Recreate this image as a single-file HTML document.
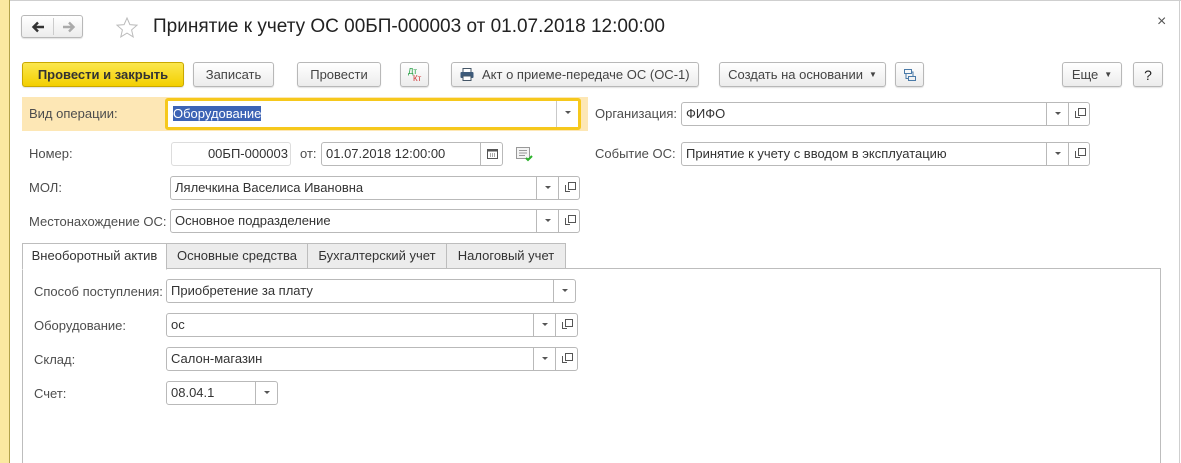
<!DOCTYPE html>
<html style="width:1181px;height:463px;overflow:hidden"><head><meta charset="utf-8"><style>
*{box-sizing:border-box;margin:0;padding:0}
body{width:1181px;height:463px;overflow:hidden;background:#fff;font-family:"Liberation Sans",Arial,sans-serif;font-size:13px;color:#333;position:relative}
.a{position:absolute}
.btn{position:absolute;height:25px;border:1px solid #b8b8b8;border-radius:3px;background:linear-gradient(#fff,#ececec);box-shadow:0 1px 1px rgba(0,0,0,.12);display:flex;align-items:center;justify-content:center;color:#444}
.lbl{position:absolute;color:#4d4d4d;line-height:16px}
.fld{position:absolute;height:24px;border:1px solid #b9b9b9;border-radius:3px;background:#fff;line-height:22px;padding-left:4px;color:#333;white-space:nowrap}
.dd{position:absolute;top:-1px;height:24px;border-left:1px solid #b9b9b9;width:23px}
.dd:after{content:"";position:absolute;left:8px;top:10px;border-left:3px solid transparent;border-right:3px solid transparent;border-top:3px solid #555}
.cp{position:absolute;top:-1px;height:24px;border-left:1px solid #b9b9b9;width:22px}
.cp:before{content:"";position:absolute;left:9px;top:6px;width:6px;height:6px;border:1px solid #555}
.cp:after{content:"";position:absolute;left:6px;top:9px;width:4px;height:6px;border-left:1px solid #555;border-bottom:1px solid #555}
.tab{position:absolute;top:243px;height:26px;border:1px solid #bdbdbd;background:#ececec;color:#333;text-align:center;line-height:24px}
</style></head><body>
<div class="a" style="left:0;top:0;width:9px;height:463px;background:#fbe9a0"></div>
<div class="a" style="left:9px;top:0;width:1px;height:463px;background:#b3a34a"></div>
<div class="a" style="left:10px;top:0;width:1171px;height:1px;background:#cfcfcf"></div>
<div class="a" style="left:1179px;top:0;width:1px;height:463px;background:#cfcfcf"></div>

<div class="btn" style="left:21px;top:15px;width:62px;height:23px;padding:0">
<svg style="position:absolute;left:9px;top:5px" width="14" height="12" viewBox="0 0 14 12"><path d="M13 6H3M7 1.5L2.5 6 7 10.5" fill="none" stroke="#333" stroke-width="2.4"/></svg>
<span style="position:absolute;left:31px;top:2px;width:1px;height:17px;background:#ccc"></span>
<svg style="position:absolute;left:40px;top:5px" width="14" height="12" viewBox="0 0 14 12"><path d="M1 6h10M7 1.5L11.5 6 7 10.5" fill="none" stroke="#aaa" stroke-width="2.4"/></svg></div>
<svg class="a" style="left:115px;top:16px" width="24" height="24" viewBox="0 0 24 24"><path d="M12 2l2.9 6.6 7.1.6-5.4 4.7 1.6 7-6.2-3.8-6.2 3.8 1.6-7L2 9.2l7.1-.6z" fill="none" stroke="#bbb" stroke-width="1"/></svg>
<div class="a" style="left:153px;top:15px;font-size:19px;color:#222;white-space:nowrap;line-height:24px">Принятие к учету ОС 00БП-000003 от 01.07.2018 12:00:00</div>
<div class="a" style="left:1157px;top:13px;font-size:16px;color:#555">×</div>

<div class="btn" style="left:22px;top:62px;width:162px;background:linear-gradient(#fbe74e,#f3cf00);border-color:#c9a800;color:#333;font-weight:bold">Провести и закрыть</div>
<div class="btn" style="left:193px;top:62px;width:81px">Записать</div>
<div class="btn" style="left:297px;top:62px;width:84px">Провести</div>
<div class="btn" style="left:400px;top:62px;width:29px"><span style="font-size:8px;line-height:8px;position:absolute;left:7px;top:5px;color:#1a9a3a">Дт</span><span style="font-size:8px;line-height:8px;position:absolute;left:12px;top:12px;color:#d03030">Кт</span></div>
<div class="btn" style="left:451px;top:62px;width:248px;justify-content:flex-start;padding-left:8px"><svg width="14" height="13" viewBox="0 0 14 13"><rect x="3" y="0.5" width="8" height="4" fill="#fff" stroke="#456"/><rect x="0.5" y="4" width="13" height="6" rx="1" fill="#3d5a7a"/><rect x="3" y="8" width="8" height="4.5" fill="#fff" stroke="#456"/></svg><span style="margin-left:8px">Акт о приеме-передаче ОС (ОС-1)</span></div>
<div class="btn" style="left:719px;top:62px;width:167px">Создать на основании <span style="font-size:8px;margin-left:6px">▼</span></div>
<div class="btn" style="left:895px;top:62px;width:29px"><svg width="14" height="14" viewBox="0 0 14 14" fill="none" stroke="#4a7aa8"><rect x="1.5" y="1.5" width="7" height="4"/><rect x="5.5" y="8.5" width="7" height="4"/><path d="M3 6v4.5h2.5M10 8.5V4H8.5"/></svg></div>
<div class="btn" style="left:1062px;top:62px;width:60px">Еще <span style="font-size:8px;margin-left:6px">▼</span></div>
<div class="btn" style="left:1133px;top:62px;width:30px;font-size:14px;color:#222">?</div>

<div class="a" style="left:22px;top:97px;width:566px;height:34px;background:#fde7b5"></div>
<div class="lbl" style="left:29px;top:106px">Вид операции:</div>
<div class="fld" style="left:165px;top:98px;width:416px;height:32px;border:3px solid #f6c81c;line-height:26px;padding-left:5px"><span style="background:#3c63b5;color:#fff">Оборудование</span><div class="dd" style="left:388px;top:0;height:26px;border-left-color:#c9c9c9"></div></div>

<div class="lbl" style="left:595px;top:106px">Организация:</div>
<div class="fld" style="left:681px;top:102px;width:409px">ФИФО<div class="dd" style="left:364px"></div><div class="cp" style="left:386px"></div></div>
<div class="lbl" style="left:595px;top:146px">Событие ОС:</div>
<div class="fld" style="left:681px;top:142px;width:409px">Принятие к учету с вводом в эксплуатацию<div class="dd" style="left:364px"></div><div class="cp" style="left:386px"></div></div>

<div class="lbl" style="left:29px;top:146px">Номер:</div>
<div class="fld" style="left:171px;top:142px;width:120px;text-align:right;padding-right:2px;border-color:#ddd">00БП-000003</div>
<div class="lbl" style="left:300px;top:146px">от:</div>
<div class="fld" style="left:321px;top:142px;width:182px">01.07.2018 12:00:00<div class="a" style="left:158px;top:-1px;width:23px;height:24px;border-left:1px solid #b9b9b9"><svg style="position:absolute;left:6px;top:6px" width="11" height="11" viewBox="0 0 11 11"><rect x="0.5" y="1.5" width="10" height="9" fill="none" stroke="#555"/><rect x="0.5" y="1.5" width="10" height="2" fill="#555"/><path d="M3 6h1M5 6h1M7 6h1M3 8h1M5 8h1M7 8h1" stroke="#555"/></svg></div></div>
<svg class="a" style="left:516px;top:147px" width="18" height="15" viewBox="0 0 18 15"><rect x="0.5" y="0.5" width="13" height="11" fill="#f4f4f4" stroke="#999"/><path d="M3 3.5h8M3 6h8M3 8.5h6" stroke="#999"/><path d="M10 11l2 2 4-4" stroke="#2bb32b" stroke-width="2" fill="none"/></svg>

<div class="lbl" style="left:29px;top:180px">МОЛ:</div>
<div class="fld" style="left:170px;top:176px;width:410px">Лялечкина Васелиса Ивановна<div class="dd" style="left:365px"></div><div class="cp" style="left:387px"></div></div>
<div class="lbl" style="left:29px;top:214px">Местонахождение ОС:</div>
<div class="fld" style="left:170px;top:209px;width:410px">Основное подразделение<div class="dd" style="left:365px"></div><div class="cp" style="left:387px"></div></div>

<div class="a" style="left:22px;top:268px;width:1139px;height:195px;border:1px solid #bdbdbd;border-bottom:none"></div>
<div class="tab" style="left:22px;width:145px;background:#fff;border-bottom-color:#fff;height:27px">Внеоборотный актив</div>
<div class="tab" style="left:166px;width:142px">Основные средства</div>
<div class="tab" style="left:307px;width:140px">Бухгалтерский учет</div>
<div class="tab" style="left:446px;width:120px">Налоговый учет</div>

<div class="lbl" style="left:34px;top:284px">Способ поступления:</div>
<div class="fld" style="left:166px;top:279px;width:410px">Приобретение за плату<div class="dd" style="left:386px"></div></div>
<div class="lbl" style="left:34px;top:318px">Оборудование:</div>
<div class="fld" style="left:166px;top:313px;width:412px">ос<div class="dd" style="left:366px"></div><div class="cp" style="left:388px"></div></div>
<div class="lbl" style="left:34px;top:352px">Склад:</div>
<div class="fld" style="left:166px;top:347px;width:412px">Салон-магазин<div class="dd" style="left:366px"></div><div class="cp" style="left:388px"></div></div>
<div class="lbl" style="left:34px;top:386px">Счет:</div>
<div class="fld" style="left:166px;top:381px;width:112px">08.04.1<div class="dd" style="left:88px"></div></div>
</body></html>
